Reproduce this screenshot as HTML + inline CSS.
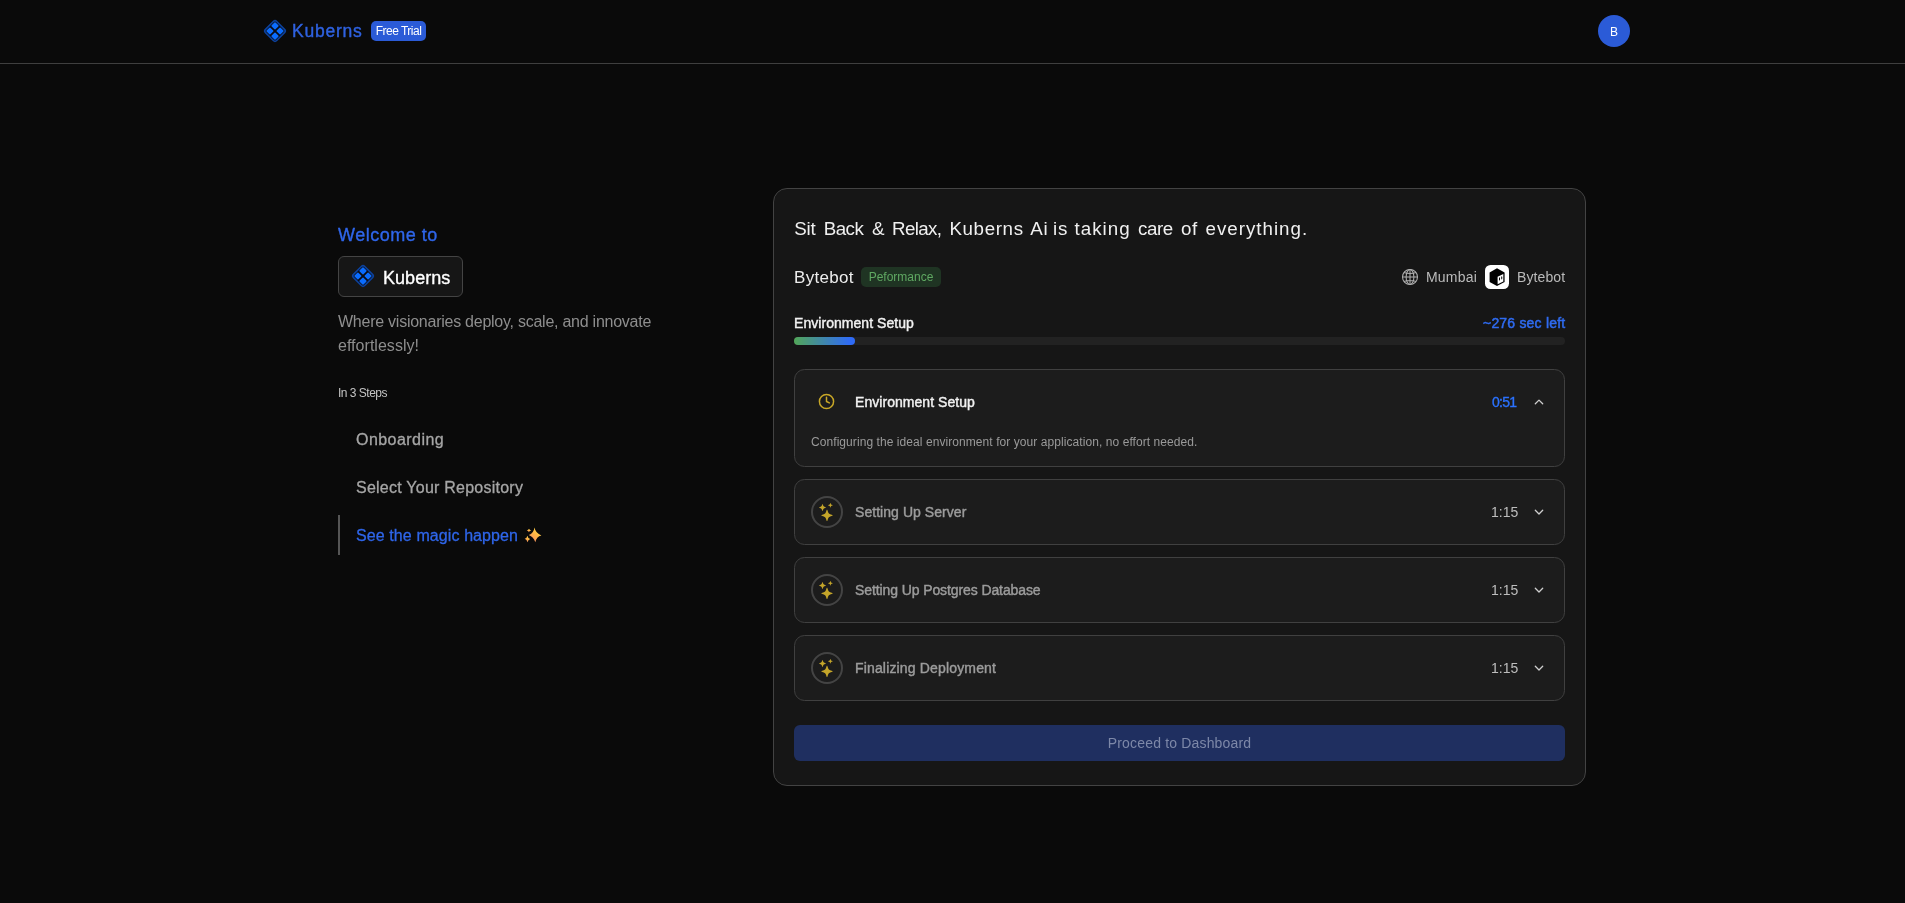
<!DOCTYPE html>
<html lang="en">
<head>
<meta charset="utf-8">
<title>Kuberns</title>
<style>
*{box-sizing:border-box;margin:0;padding:0}
html,body{width:1905px;height:903px;overflow:hidden;background:#0a0a0a}
body{font-family:"Liberation Sans",sans-serif;color:#ededed;position:relative}
.abs{will-change:transform}
.abs{position:absolute;white-space:nowrap;line-height:1}
svg{display:block}
/* header */
#hdr{position:absolute;left:0;top:0;width:1905px;height:64px;border-bottom:1px solid #3f3f3f}
#logo{left:260.6px;top:17.3px}
#brand{left:292px;top:23px;font-size:17.5px;color:#2f62e0;letter-spacing:0.78px;-webkit-text-stroke:0.4px #2f62e0}
#trial{left:371px;top:21px;width:55px;height:20px;border-radius:5px;background:#2b5bd7;color:#fff;font-size:12px;text-align:center;line-height:20px;letter-spacing:-0.5px}
#avatar{left:1598px;top:15px;width:32px;height:32px;border-radius:50%;background:#2b5bd7;color:#fff;font-size:12px;text-align:center;line-height:34px}
/* left */
#welcome{left:338px;top:226px;font-size:18px;font-weight:400;color:#2f66ea;letter-spacing:0.5px;-webkit-text-stroke:0.35px #2f66ea}
#kbox{left:338px;top:256px;width:125px;height:41px;border:1px solid #444;border-radius:6px;background:#161616}
#kbox svg{position:absolute;left:9.7px;top:5.2px}
#kbox span{position:absolute;left:44px;top:11.7px;font-size:18px;color:#fff;line-height:1;-webkit-text-stroke:0.35px #fff;letter-spacing:0.05px}
#tag{left:338px;top:310px;font-size:16px;line-height:24px;color:#8e8e8e;white-space:normal;width:340px;letter-spacing:-0.25px}
#in3{left:338px;top:387px;font-size:12px;color:#c4c4c4;letter-spacing:-0.5px}
.step{font-size:16px;color:#a6a6a6;left:356px}
#s1{top:432px;letter-spacing:0.45px;-webkit-text-stroke:0.3px #a6a6a6}
#s2{top:480px;letter-spacing:0.24px;-webkit-text-stroke:0.3px #a6a6a6}
#s3{top:528px;color:#2f66ea;letter-spacing:0.1px;-webkit-text-stroke:0.3px #2f66ea}
#bar{left:338px;top:515px;width:2px;height:40px;background:#555}
#spark{left:518px;top:522px}
/* card */
#card{left:773px;top:188px;width:813px;height:598px;border:1px solid #434343;border-radius:14px;background:#161616}
#title{left:794px;top:220.3px;font-size:18.75px;color:#f0f0f0;width:520px;height:22px}
#title span{position:absolute;top:0}
#app{left:794px;top:269.3px;font-size:17px;color:#ededed;letter-spacing:0.3px}
#perf{left:861px;top:267px;width:80px;height:20px;border-radius:5px;background:#1f3423;color:#5fa862;font-size:12px;text-align:center;line-height:20px}
#globe{left:1401px;top:268px}
#mumbai{left:1426px;top:270px;font-size:14px;color:#bababa;letter-spacing:0.2px}
#bbicon{left:1485px;top:264.8px;width:24.2px;height:24.4px;border-radius:5.5px;background:#fff}
#bb2{left:1517px;top:270px;font-size:14px;color:#bababa;letter-spacing:0.1px}
#envl{left:794px;top:316px;font-size:14px;font-weight:400;color:#f2f2f2;letter-spacing:0.05px;-webkit-text-stroke:0.42px #f2f2f2}
#left{right:340px;top:316px;font-size:14px;font-weight:400;color:#2f6bf0;letter-spacing:0.2px;-webkit-text-stroke:0.5px #2f6bf0}
#track{left:794px;top:337px;width:771px;height:8px;border-radius:4px;background:#222}
#fill{left:794px;top:337px;width:61px;height:8px;border-radius:4px;background:linear-gradient(90deg,#52a658 0%,#2f6bf6 92%)}
.box{position:absolute;left:794px;width:771px;border:1px solid #404040;border-radius:10.5px;background:#1c1c1c}
#b1{top:369px;height:98px}
#b2{top:479px;height:66px}
#b3{top:557px;height:66px}
#b4{top:635px;height:66px}
.ring{position:absolute;left:811px;width:32px;height:32px;border-radius:50%;border:2px solid #444}
.sname{left:855px;font-size:14px;font-weight:400;color:#9c9c9c;letter-spacing:0.05px;-webkit-text-stroke:0.42px currentColor}
.stime{left:1491px;font-size:14px;color:#bdbdbd}
.chev{left:1533px}
#desc{left:811.4px;top:436px;font-size:12px;color:#9a9a9a;letter-spacing:0.07px}
#btn{left:794px;top:725px;width:771px;height:36px;border-radius:6px;background:#1f2f60;color:#7d88a8;font-size:14px;text-align:center;line-height:36px;letter-spacing:0.17px}
</style>
</head>
<body>
<div id="hdr"></div>
<svg id="logo" class="abs" width="28" height="28" viewBox="-13 -13 26 26"><g transform="rotate(45)"><rect x="-7.35" y="-7.35" width="14.7" height="14.7" rx="2.2" fill="#0a0c16" stroke="#0c419c" stroke-width="1.5"/><g fill="#0a6cff"><rect x="-5.9" y="-5.9" width="5.1" height="5.1" rx="0.7"/><rect x="0.8" y="-5.9" width="5.1" height="5.1" rx="0.7"/><rect x="-5.9" y="0.8" width="5.1" height="5.1" rx="0.7"/><rect x="0.8" y="0.8" width="5.1" height="5.1" rx="0.7"/></g></g></svg>
<div id="brand" class="abs">Kuberns</div>
<div id="trial" class="abs">Free Trial</div>
<div id="avatar" class="abs">B</div>

<div id="welcome" class="abs">Welcome to</div>
<div id="kbox" class="abs"><svg width="28" height="28" viewBox="-13 -13 26 26"><g transform="rotate(45)"><rect x="-7.35" y="-7.35" width="14.7" height="14.7" rx="2.2" fill="#0a0c16" stroke="#0c419c" stroke-width="1.5"/><g fill="#0a6cff"><rect x="-5.9" y="-5.9" width="5.1" height="5.1" rx="0.7"/><rect x="0.8" y="-5.9" width="5.1" height="5.1" rx="0.7"/><rect x="-5.9" y="0.8" width="5.1" height="5.1" rx="0.7"/><rect x="0.8" y="0.8" width="5.1" height="5.1" rx="0.7"/></g></g></svg><span>Kuberns</span></div>
<div id="tag" class="abs">Where visionaries deploy, scale, and innovate<br><span style="letter-spacing:0.03px">effortlessly!</span></div>
<div id="in3" class="abs">In 3 Steps</div>
<div id="s1" class="abs step">Onboarding</div>
<div id="s2" class="abs step">Select Your Repository</div>
<div id="bar" class="abs"></div>
<div id="s3" class="abs step">See the magic happen</div>
<svg id="spark" class="abs" role="img" aria-label="✨" width="30" height="26" viewBox="0 0 30 26"><defs><linearGradient id="sg" x1="0.8" y1="0.1" x2="0.2" y2="0.95"><stop offset="0" stop-color="#ffd844"/><stop offset="0.5" stop-color="#ffb347"/><stop offset="1" stop-color="#ff8f6b"/></linearGradient></defs><g fill="url(#sg)"><path d="M16.5 5.6 Q17.6 11.4 23.4 13.5 Q18.4 14.6 17.3 20.3 Q15.6 15.2 10.8 13.1 Q15.6 11.6 16.5 5.6Z"/><path d="M11 6.8 Q11.4 8.1 13.3 8.5 Q11.4 8.9 10.9 10.2 Q10.5 8.9 8.7 8.5 Q10.5 8.1 11 6.8Z"/><path d="M9.4 13.7 Q9.9 16.4 12.2 16.9 Q10 17.6 9.5 20.2 Q8.9 17.6 6.7 16.7 Q8.9 16.2 9.4 13.7Z"/></g></svg>

<div id="card" class="abs"></div>
<div id="title" class="abs"><span style="left:0.3px;letter-spacing:-0.29px">Sit</span> <span style="left:29.8px;letter-spacing:-0.57px">Back</span> <span style="left:77.9px;letter-spacing:0.00px">&amp;</span> <span style="left:98.0px;letter-spacing:-0.63px">Relax,</span> <span style="left:155.4px;letter-spacing:0.64px">Kuberns</span> <span style="left:236.2px;letter-spacing:0.89px">Ai</span> <span style="left:259.1px;letter-spacing:0.83px">is</span> <span style="left:280.6px;letter-spacing:1.00px">taking</span> <span style="left:344.0px;letter-spacing:-0.42px">care</span> <span style="left:387.0px;letter-spacing:0.67px">of</span> <span style="left:411.6px;letter-spacing:0.98px">everything.</span></div>
<div id="app" class="abs">Bytebot</div>
<div id="perf" class="abs">Peformance</div>
<svg id="globe" class="abs" width="18" height="18" viewBox="0 0 18 18" fill="none" stroke="#b0b0b0" stroke-width="1.05"><circle cx="9" cy="9" r="7.5"/><ellipse cx="9" cy="9" rx="3.9" ry="7.5"/><path d="M9 1.5V16.5M1.5 9H16.5M2.8 4.6Q9 6.4 15.2 4.6M2.8 13.4Q9 11.6 15.2 13.4"/></svg>
<div id="mumbai" class="abs">Mumbai</div>
<div id="bbicon" class="abs"><svg width="24" height="24" viewBox="0 0 24 24"><path d="M12 3.3 L19.6 7.5 V17 L12 21 L4.6 17 V7.5Z" fill="#000"/><path d="M12.6 11.8 L18.3 9 V16.4 L12.6 19.3Z" fill="#fff"/><ellipse cx="14.5" cy="13.9" rx="0.55" ry="1.6" fill="#000"/><ellipse cx="16.75" cy="12.8" rx="0.55" ry="1.6" fill="#000"/></svg></div>
<div id="bb2" class="abs">Bytebot</div>
<div id="envl" class="abs">Environment Setup</div>
<div id="left" class="abs">~276 sec left</div>
<div id="track" class="abs"></div>
<div id="fill" class="abs"></div>

<div id="b1" class="box"></div>
<div id="b2" class="box"></div>
<div id="b3" class="box"></div>
<div id="b4" class="box"></div>

<svg class="abs" style="left:818px;top:393px" width="17" height="17" viewBox="0 0 24 24" fill="none" stroke="#c9a827" stroke-width="2.1" stroke-linecap="round" stroke-linejoin="round"><circle cx="12" cy="12" r="10"/><path d="M12 6V12L16 14"/></svg>
<div class="abs sname" style="top:395px;color:#f2f2f2">Environment Setup</div>
<div class="abs stime" style="top:395px;left:1491.6px;color:#2b72ff;letter-spacing:-0.7px;-webkit-text-stroke:0.35px #2b72ff">0:51</div>
<svg class="abs chev" style="top:396px" width="12" height="12" viewBox="0 0 12 12" fill="none" stroke="#cfcfcf" stroke-width="1.3" stroke-linecap="round" stroke-linejoin="round"><path d="M2.3 7.8 L6 4.1 L9.7 7.8"/></svg>
<div id="desc" class="abs">Configuring the ideal environment for your application, no effort needed.</div>

<div class="ring" style="top:496px"></div>
<svg class="abs" style="left:818px;top:503px" width="18" height="18" viewBox="0 0 16 16" fill="#c4a52a"><path d="M7.657 6.247c.11-.33.576-.33.686 0l.645 1.937a2.89 2.89 0 0 0 1.829 1.828l1.936.645c.33.11.33.576 0 .686l-1.937.645a2.89 2.89 0 0 0-1.828 1.829l-.645 1.936a.361.361 0 0 1-.686 0l-.645-1.937a2.89 2.89 0 0 0-1.828-1.828l-1.937-.645a.361.361 0 0 1 0-.686l1.937-.645a2.89 2.89 0 0 0 1.828-1.828l.645-1.937zM3.794 1.148a.217.217 0 0 1 .412 0l.387 1.162c.173.518.579.924 1.097 1.097l1.162.387a.217.217 0 0 1 0 .412l-1.162.387A1.734 1.734 0 0 0 4.593 5.69l-.387 1.162a.217.217 0 0 1-.412 0L3.407 5.69A1.734 1.734 0 0 0 2.31 4.593l-1.162-.387a.217.217 0 0 1 0-.412l1.162-.387A1.734 1.734 0 0 0 3.407 2.31l.387-1.162zM10.863.099a.145.145 0 0 1 .274 0l.258.774c.115.346.386.617.732.732l.774.258a.145.145 0 0 1 0 .274l-.774.258a1.156 1.156 0 0 0-.732.732l-.258.774a.145.145 0 0 1-.274 0l-.258-.774a1.156 1.156 0 0 0-.732-.732L9.1 2.137a.145.145 0 0 1 0-.274l.774-.258c.346-.115.617-.386.732-.732L10.863.1z"/></svg>
<div class="abs sname" style="top:505px">Setting Up Server</div>
<div class="abs stime" style="top:505px">1:15</div>
<svg class="abs chev" style="top:506px" width="12" height="12" viewBox="0 0 12 12" fill="none" stroke="#cfcfcf" stroke-width="1.3" stroke-linecap="round" stroke-linejoin="round"><path d="M2.3 4.3 L6 8 L9.7 4.3"/></svg>

<div class="ring" style="top:574px"></div>
<svg class="abs" style="left:818px;top:581px" width="18" height="18" viewBox="0 0 16 16" fill="#c4a52a"><path d="M7.657 6.247c.11-.33.576-.33.686 0l.645 1.937a2.89 2.89 0 0 0 1.829 1.828l1.936.645c.33.11.33.576 0 .686l-1.937.645a2.89 2.89 0 0 0-1.828 1.829l-.645 1.936a.361.361 0 0 1-.686 0l-.645-1.937a2.89 2.89 0 0 0-1.828-1.828l-1.937-.645a.361.361 0 0 1 0-.686l1.937-.645a2.89 2.89 0 0 0 1.828-1.828l.645-1.937zM3.794 1.148a.217.217 0 0 1 .412 0l.387 1.162c.173.518.579.924 1.097 1.097l1.162.387a.217.217 0 0 1 0 .412l-1.162.387A1.734 1.734 0 0 0 4.593 5.69l-.387 1.162a.217.217 0 0 1-.412 0L3.407 5.69A1.734 1.734 0 0 0 2.31 4.593l-1.162-.387a.217.217 0 0 1 0-.412l1.162-.387A1.734 1.734 0 0 0 3.407 2.31l.387-1.162zM10.863.099a.145.145 0 0 1 .274 0l.258.774c.115.346.386.617.732.732l.774.258a.145.145 0 0 1 0 .274l-.774.258a1.156 1.156 0 0 0-.732.732l-.258.774a.145.145 0 0 1-.274 0l-.258-.774a1.156 1.156 0 0 0-.732-.732L9.1 2.137a.145.145 0 0 1 0-.274l.774-.258c.346-.115.617-.386.732-.732L10.863.1z"/></svg>
<div class="abs sname" style="top:583px;letter-spacing:-0.1px">Setting Up Postgres Database</div>
<div class="abs stime" style="top:583px">1:15</div>
<svg class="abs chev" style="top:584px" width="12" height="12" viewBox="0 0 12 12" fill="none" stroke="#cfcfcf" stroke-width="1.3" stroke-linecap="round" stroke-linejoin="round"><path d="M2.3 4.3 L6 8 L9.7 4.3"/></svg>

<div class="ring" style="top:652px"></div>
<svg class="abs" style="left:818px;top:659px" width="18" height="18" viewBox="0 0 16 16" fill="#c4a52a"><path d="M7.657 6.247c.11-.33.576-.33.686 0l.645 1.937a2.89 2.89 0 0 0 1.829 1.828l1.936.645c.33.11.33.576 0 .686l-1.937.645a2.89 2.89 0 0 0-1.828 1.829l-.645 1.936a.361.361 0 0 1-.686 0l-.645-1.937a2.89 2.89 0 0 0-1.828-1.828l-1.937-.645a.361.361 0 0 1 0-.686l1.937-.645a2.89 2.89 0 0 0 1.828-1.828l.645-1.937zM3.794 1.148a.217.217 0 0 1 .412 0l.387 1.162c.173.518.579.924 1.097 1.097l1.162.387a.217.217 0 0 1 0 .412l-1.162.387A1.734 1.734 0 0 0 4.593 5.69l-.387 1.162a.217.217 0 0 1-.412 0L3.407 5.69A1.734 1.734 0 0 0 2.31 4.593l-1.162-.387a.217.217 0 0 1 0-.412l1.162-.387A1.734 1.734 0 0 0 3.407 2.31l.387-1.162zM10.863.099a.145.145 0 0 1 .274 0l.258.774c.115.346.386.617.732.732l.774.258a.145.145 0 0 1 0 .274l-.774.258a1.156 1.156 0 0 0-.732.732l-.258.774a.145.145 0 0 1-.274 0l-.258-.774a1.156 1.156 0 0 0-.732-.732L9.1 2.137a.145.145 0 0 1 0-.274l.774-.258c.346-.115.617-.386.732-.732L10.863.1z"/></svg>
<div class="abs sname" style="top:661px;letter-spacing:0.16px">Finalizing Deployment</div>
<div class="abs stime" style="top:661px">1:15</div>
<svg class="abs chev" style="top:662px" width="12" height="12" viewBox="0 0 12 12" fill="none" stroke="#cfcfcf" stroke-width="1.3" stroke-linecap="round" stroke-linejoin="round"><path d="M2.3 4.3 L6 8 L9.7 4.3"/></svg>

<div id="btn" class="abs">Proceed to Dashboard</div>
</body>
</html>
